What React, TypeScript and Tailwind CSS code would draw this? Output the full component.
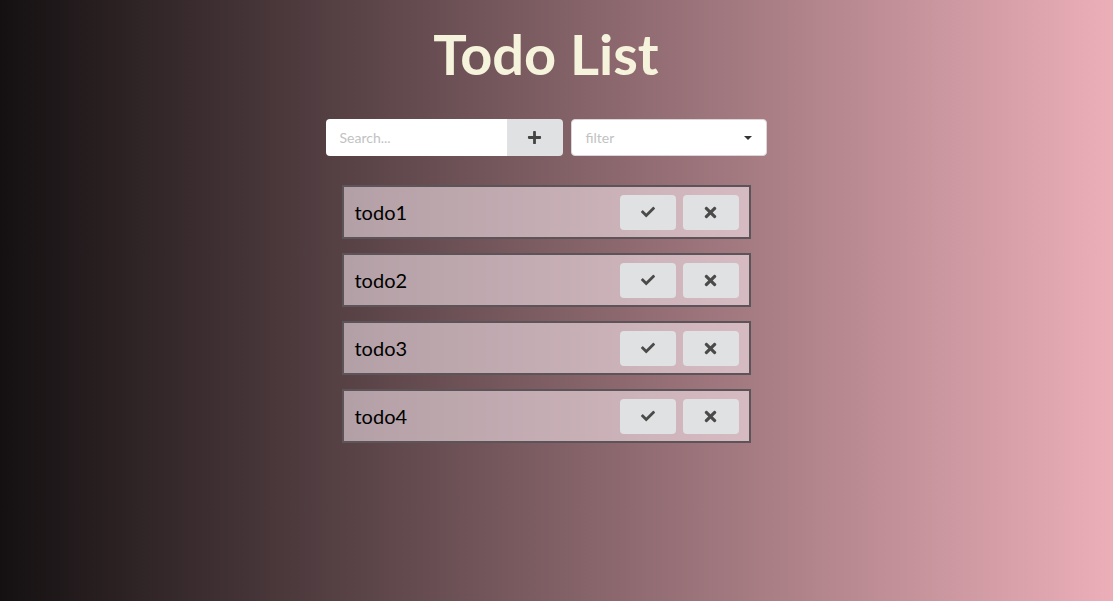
import { FaCheck, FaTimes, FaPlus } from 'react-icons/fa'

const TODOS = ['todo1', 'todo2', 'todo3', 'todo4']

function TodoItem({ label }: { label: string }) {
  return (
    <div className="flex h-[54px] items-center justify-between border-2 border-[#5d5459] bg-[#ffeef6]/55 pl-[11px] pr-[10px]">
      <span className="text-[20px] text-black">{label}</span>
      <div className="flex gap-[7px]">
        <button className="flex h-[35px] w-[56px] items-center justify-center rounded-[4px] bg-[#e0e1e2] text-[#4a4a4a]">
          <FaCheck className="h-[14px] w-[14px]" />
        </button>
        <button className="flex h-[35px] w-[56px] items-center justify-center rounded-[4px] bg-[#e0e1e2] text-[#4a4a4a]">
          <FaTimes className="h-[17px] w-[17px]" />
        </button>
      </div>
    </div>
  )
}

export default function App() {
  return (
    <div
      className="flex h-[601px] w-full flex-col items-center bg-[linear-gradient(to_right,#141011,#ecafb9)] pr-[21px]"
      style={{ fontFamily: 'Lato, "Noto Sans", sans-serif' }}
    >
      <h1 className="mt-[22px] text-[56px] font-bold leading-[64px] text-[#f5f3dc]">Todo List</h1>

      <div className="mt-[33px] flex gap-[8px]">
        <div className="flex h-[37px]">
          <input
            className="h-full w-[181px] rounded-l-[4px] bg-white px-[14px] text-[14px] text-black outline-none placeholder:text-[#c2c2c2]"
            placeholder="Search..."
          />
          <button className="flex h-full w-[56px] items-center justify-center rounded-r-[4px] bg-[#e0e1e2] text-[#444]">
            <FaPlus className="h-[15px] w-[15px]" />
          </button>
        </div>
        <div className="flex h-[37px] w-[196px] items-center justify-between rounded-[4px] border border-[#dcd6d8] bg-white pl-[14px] pr-[14px]">
          <span className="text-[14px] text-[#c2c2c2]">filter</span>
          <span className="h-0 w-0 border-x-[4px] border-t-[4px] border-x-transparent border-t-[#333]" />
        </div>
      </div>

      <div className="mt-[29px] flex w-[409px] flex-col gap-[14px]">
        {TODOS.map((t) => (
          <TodoItem key={t} label={t} />
        ))}
      </div>
    </div>
  )
}
